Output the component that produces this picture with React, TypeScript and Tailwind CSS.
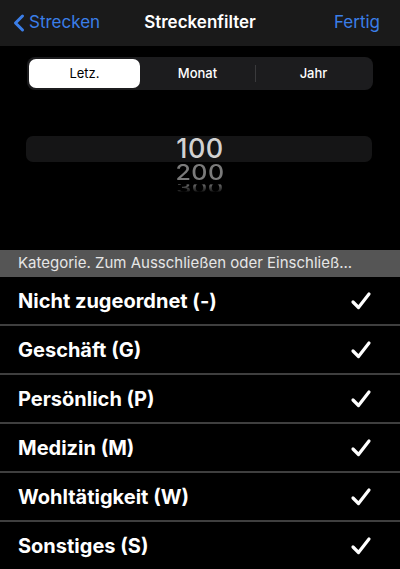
import { ChevronLeft } from "lucide-react";

const CATEGORIES = [
  "Nicht zugeordnet (-)",
  "Geschäft (G)",
  "Persönlich (P)",
  "Medizin (M)",
  "Wohltätigkeit (W)",
  "Sonstiges (S)",
];

function Check() {
  return (
    <svg width="22" height="20" viewBox="0 0 22 20" fill="none">
      <path
        d="M3 11 L8.5 16.5 L19 3"
        stroke="#ffffff"
        strokeWidth="3.2"
        strokeLinecap="round"
        strokeLinejoin="round"
      />
    </svg>
  );
}

export default function App() {
  return (
    <div
      className="w-[400px] h-[569px] overflow-hidden bg-black text-white"
      style={{ fontFamily: "Inter, 'Liberation Sans', sans-serif" }}
    >
      {/* Nav bar */}
      <div className="h-[46px] bg-[#1a1a1a] flex items-center px-[6px] relative">
        <div className="flex items-center text-[#3b7ee8] text-[17px]">
          <ChevronLeft size={28} strokeWidth={2.6} className="-ml-[1px]" />
          <span className="-ml-[4px]">Strecken</span>
        </div>
        <div className="absolute left-0 right-0 text-center text-[17px] font-semibold pointer-events-none">
          Streckenfilter
        </div>
        <div className="ml-auto mr-[14px] text-[#3b7ee8] text-[17px]">Fertig</div>
      </div>

      {/* Segmented control */}
      <div className="px-[27px] pt-[11px]">
        <div className="h-[33px] bg-[#1c1c1e] rounded-[8px] flex items-center p-[2px] text-[13px]">
          <div className="w-[111px] h-full bg-white text-black rounded-[7px] flex items-center justify-center">
            Letz.
          </div>
          <div className="flex-1 h-full flex items-center justify-center font-medium">Monat</div>
          <div className="w-px h-[17px] bg-[#3a3a3c]" />
          <div className="flex-1 h-full flex items-center justify-center font-medium">Jahr</div>
        </div>
      </div>

      {/* Picker */}
      <div className="px-[26px] pt-[46px] h-[160px]">
        <div className="relative">
          <div className="h-[26px] w-[346px] bg-[#151516] rounded-[7px]" />
          <div className="absolute inset-x-0 top-0 flex flex-col items-center">
            <div className="h-[26px] text-[27px] leading-[26px] font-medium tracking-[0.5px] text-[#d2d2d2]">100</div>
            <div className="h-[20px] text-[25px] leading-[20px] font-medium tracking-[0.5px] text-[#7a7a7a] scale-y-[0.85]">200</div>
            <div className="h-[12px] text-[24px] leading-[12px] font-medium tracking-[0.5px] scale-y-[0.6] bg-clip-text text-transparent bg-gradient-to-b from-[#6a6a6a] to-[#1a1a1a]">
              300
            </div>
          </div>
        </div>
      </div>

      {/* Section header */}
      <div className="h-[27px] bg-[#555555] flex items-center px-[18px] text-[15px] text-[#e6e6e6] whitespace-nowrap overflow-hidden">
        Kategorie. Zum Ausschließen oder Einschließ...
      </div>

      {/* Rows */}
      {CATEGORIES.map((c) => (
        <div key={c} className="border-b-2 border-[#3f3f3f]">
          <div className="h-[47px] flex items-center pl-[18px] pr-[28px]">
            <span
              className="text-[20px] font-bold text-white"
              style={{ textShadow: "0 0 2px #000, 0 0 2px #000" }}
            >
              {c}
            </span>
            <span className="ml-auto">
              <Check />
            </span>
          </div>
        </div>
      ))}
    </div>
  );
}
